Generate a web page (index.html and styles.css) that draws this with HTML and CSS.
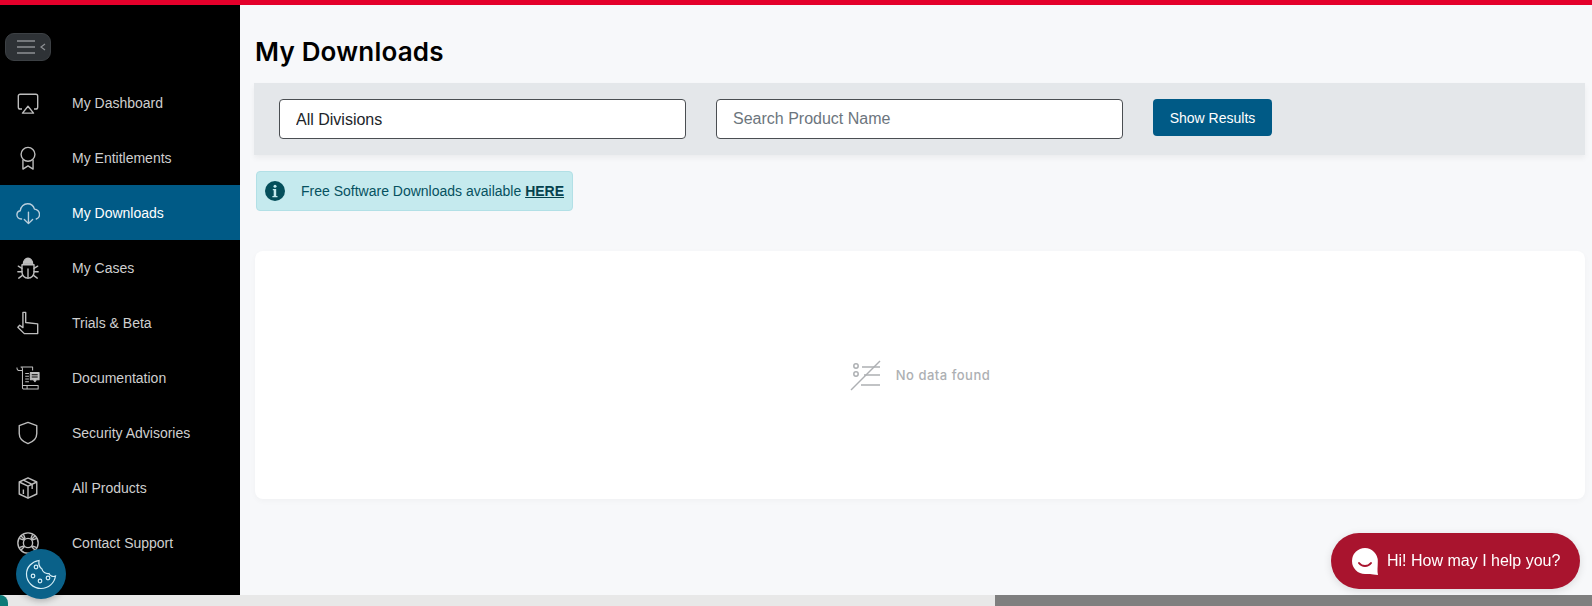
FILE: index.html
```html
<!DOCTYPE html>
<html lang="en">
<head>
<meta charset="utf-8">
<title>My Downloads</title>
<link rel="stylesheet" href="styles.css">
</head>
<body>
<div class="topbar"></div>
<div class="shell">
  <aside class="sidebar">
    <button class="toggle" aria-label="Collapse menu">
      <svg class="toggle-icon" width="36" height="20" viewBox="0 0 36 20" fill="none" stroke="#8d9094" stroke-width="1.6">
        <path d="M7 4h18M7 10h18M7 16h18"/>
        <path d="M35 7l-4 3 4 3" stroke-width="1.2"/>
      </svg>
    </button>
    <nav class="menu">
      <a class="item">
        <svg class="ico" viewBox="0 0 26 26" fill="none" stroke="currentColor" stroke-width="1.5" stroke-linejoin="round"><path d="M6.5 19.5H4.5a2 2 0 0 1-2-2V5.5a2 2 0 0 1 2-2h17a2 2 0 0 1 2 2v12a2 2 0 0 1-2 2h-2"/><path d="M13 16.5l6 7.5H7z"/></svg>
        <span>My Dashboard</span>
      </a>
      <a class="item">
        <svg class="ico" viewBox="0 0 26 26" fill="none" stroke="currentColor" stroke-width="1.5" stroke-linejoin="round"><circle cx="13" cy="9" r="7.5"/><path d="M7.5 15v10l5.5-3.5 5.500 3.500V15"/></svg>
        <span>My Entitlements</span>
      </a>
      <a class="item active">
        <svg class="ico" viewBox="0 0 26 26" fill="none" stroke="currentColor" stroke-width="1.500" stroke-linecap="round" stroke-linejoin="round"><path d="M6 19.500H5.500A4.500 4.500 0 0 1 1 15c0-2.400 1.600-4 3.600-4.400C5 6 8.500 3 12.500 3c3.800 0 6.500 2.300 7.500 5.800 3 .2 5.500 2.700 5.500 5.700 0 2.500-1.500 4.300-3.500 5"/><path d="M13.500 12v12.500M9 20l4.500 4.500L18 20"/></svg>
        <span>My Downloads</span>
      </a>
      <a class="item">
        <svg class="ico" viewBox="0 0 26 26" fill="none" stroke="currentColor" stroke-width="1.500" stroke-linecap="round" stroke-linejoin="round"><path d="M8 8.500c0-3.400 2.200-6 5-6s5 2.600 5 6z" fill="currentColor"/><path d="M6.500 9.500h13v8c0 3.800-2.900 6.500-6.500 6.500s-6.500-2.700-6.500-6.500z"/><path d="M13 14v10M6.500 13.500L2.500 11M19.500 13.500l4-2.500M6.500 17H2M19.500 17H24M7 21l-4 3M19 21l4 3"/></svg>
        <span>My Cases</span>
      </a>
      <a class="item">
        <svg class="ico" viewBox="0 0 26 26" fill="none" stroke="currentColor" stroke-width="1.500" stroke-linejoin="round"><path d="M7.500 1.500h3v11l13 1.500v10.500H9L2 17.500l2-2 3.500 2.500z"/></svg>
        <span>Trials &amp; Beta</span>
      </a>
      <a class="item">
        <svg class="ico" viewBox="0 0 26 26" fill="none" stroke="currentColor" stroke-width="1.100" stroke-linejoin="round"><path d="M5 1h13v4M1 1.500c0 2.500 1 3.500 3 3.500h3V3c0-1.500-1-2-2-2M7 3v20.500a1.500 1.500 0 0 0 1.500 1.500H24v-4H12v4M7.500 21H12"/><path d="M10 8h4M10 11h4M10 14h4M10 17h4"/><path d="M15.500 7H25v8h-3l-1.500 2-1.500-2h-3.500z" fill="currentColor"/><path d="M17 9.500h6.500M17 12h6.500" stroke="#000"/></svg>
        <span>Documentation</span>
      </a>
      <a class="item">
        <svg class="ico" viewBox="0 0 26 26" fill="none" stroke="currentColor" stroke-width="1.500" stroke-linejoin="round"><path d="M13 1.500L22.500 5v8.500c0 5.500-4 9-9.500 11-5.500-2-9.500-5.500-9.500-11V5z"/></svg>
        <span>Security Advisories</span>
      </a>
      <a class="item">
        <svg class="ico" viewBox="0 0 26 26" fill="none" stroke="currentColor" stroke-width="1.500" stroke-linejoin="round"><path d="M13 2l9.500 4.500v13L13 24l-9.500-4.500v-13z"/><path d="M3.500 6.500L13 11l9.500-4.500M13 11v13M8 4.500l9.500 4.500v5M8 14.500v5"/></svg>
        <span>All Products</span>
      </a>
      <a class="item">
        <svg class="ico" viewBox="0 0 26 26" fill="none" stroke="currentColor" stroke-width="1.500"><circle cx="13" cy="13" r="11"/><circle cx="13" cy="13" r="5"/><path d="M5.500 5.500l4 4M20.500 5.500l-4 4M5.500 20.500l4-4M20.500 20.500l-4-4M8 3.500l2 5M18 3.500l-2 5M3.500 8l5 2M3.500 18l5-2M22.500 8l-5 2M22.500 18l-5-2"/></svg>
        <span>Contact Support</span>
      </a>
    </nav>
  </aside>
  <main class="content">
    <h1 class="title">My Downloads</h1>
    <section class="filters">
      <select class="control select">
        <option>All Divisions</option>
      </select>
      <input class="control" type="text" placeholder="Search Product Name">
      <button class="show">Show Results</button>
    </section>
    <div class="notice">
      <svg class="notice-icon" viewBox="0 0 20 20"><circle cx="10" cy="10" r="10" fill="#054f5b"/><circle cx="10" cy="5.200" r="1.500" fill="#c5eaee"/><path d="M7.800 8h3.400v7h1.300v1.300h-5.100V15h1.300V9.300H7.800z" fill="#c5eaee"/></svg>
      <span>Free Software Downloads available <a class="notice-link">HERE</a></span>
    </div>
    <section class="card">
      <svg class="empty-icon" viewBox="0 0 32 32" fill="none" stroke="#adb0b3" stroke-width="1.500"><circle cx="6" cy="7" r="2.200"/><circle cx="6" cy="15" r="2.200"/><path d="M12 8h18M14 16h16M11 26h19"/><path d="M1 31L30 2"/></svg>
      <span class="empty-text">No data found</span>
    </section>
  </main>
</div>
<div class="scrolltrack"><div class="corner"></div><div class="thumb"></div></div>
<button class="cookie" aria-label="Cookie settings">
  <svg width="32" height="32" viewBox="0 0 32 32" fill="none" stroke="#d5eef6" stroke-width="1.200"><path d="M14 2.500C7 3.500 1.500 9 1.500 16c0 8 6.500 14.500 14.500 14.500 7.500 0 13.500-5.500 14.500-12.500-2.500 1.200-5.500 0-6.500-2.500-3.500.5-6.500-1.500-7-4.500-2.500-1.500-3.500-5-3-8.500z"/><circle cx="11" cy="9" r="1.800"/><circle cx="8" cy="18" r="1.800"/><circle cx="15" cy="23" r="1.800"/><circle cx="23" cy="20" r="1.800"/></svg>
</button>
<button class="chat">
  <svg width="28" height="28" viewBox="0 0 28 28"><path d="M14 1a13 13 0 1 0 0 26c3 0 6 0 13 1-1-4-.200-8-.200-14A13 13 0 0 0 14 1z" fill="#fff"/><path d="M8 16c3 4 9 4 12 0" fill="none" stroke="#a9142e" stroke-width="2" stroke-linecap="round"/></svg>
  <span>Hi! How may I help you?</span>
</button>
</body>
</html>
```
FILE: styles.css
```css
* { box-sizing: border-box; }
html, body { height: 100%; }
body {
  margin: 0;
  display: flex;
  flex-direction: column;
  overflow: hidden;
  font-family: "Liberation Sans", Arial, sans-serif;
  background: #f7f8fa;
}
.topbar { height: 5px; flex: none; background: #e4002b; }
.shell { flex: 1; min-height: 0; display: flex; overflow: hidden; }

.sidebar { width: 240px; flex: none; background: #000; display: flex; flex-direction: column; }
.toggle {
  width: 46px; height: 28px;
  margin: 28px 0 14px 5px;
  padding: 0;
  display: flex; align-items: center; justify-content: flex-start;
  background: #2e3236;
  border: 1px solid #3c4044;
  border-radius: 9px;
}
.toggle-icon { flex: none; margin-left: 4px; }
.menu { display: flex; flex-direction: column; }
.item {
  height: 55px;
  display: flex; align-items: center; gap: 32px;
  padding-left: 16px;
  color: #cfcfcf;
  font-size: 14px;
}
.item.active { background: #005a86; color: #fff; font-weight: 400; }
.item.active .ico { color: #b9cfdd; }
.ico { width: 24px; height: 24px; flex: none; color: #bdbdbd; }

.content { flex: 1; min-width: 0; padding: 0 7px 0 15px; }
.title {
  margin: 0;
  height: 78px;
  padding-top: 29px;
  font-family: Inter, "Liberation Sans", sans-serif;
  font-size: 26px;
  line-height: 36px;
  font-weight: 600;
  color: #000;
  letter-spacing: .2px;
}
.filters {
  height: 72px;
  margin-left: -1px;
  padding: 16px 25px;
  display: flex; align-items: flex-start; gap: 30px;
  background: #e4e7ea;
  box-shadow: 0 3px 6px rgba(0, 0, 0, .05);
}
.control {
  width: 407px; height: 40px;
  padding: 0 16px;
  background: #fff;
  border: 1px solid #4a4e52;
  border-radius: 4px;
  font-family: inherit;
  font-size: 16px;
  color: #212529;
}
.control::placeholder { color: #6c757d; opacity: 1; }
.select {
  appearance: none;
  background-image: linear-gradient(#000, #000);
  background-size: 0 0;
  background-repeat: no-repeat;
}
.show {
  width: 119px; height: 37px;
  padding: 0;
  background: #005a86;
  border: 0;
  border-radius: 4px;
  color: #fff;
  font-family: inherit;
  font-size: 14px;
}
.notice {
  width: 317px; height: 40px;
  margin: 16px 0 0 1px;
  padding-left: 8px;
  display: flex; align-items: center; gap: 16px;
  background: #c5eaee;
  border: 1px solid #b2e0e6;
  border-radius: 4px;
  color: #055160;
  font-size: 14px;
}
.notice-icon { width: 20px; height: 20px; flex: none; }
.notice-link { font-weight: 700; text-decoration: underline; color: #04414d; }
.card {
  height: 248px;
  margin-top: 40px;
  display: flex; align-items: center; justify-content: center; gap: 14px;
  background: #fff;
  border-radius: 8px;
  box-shadow: 0 2px 6px rgba(0, 0, 0, .03);
}
.empty-icon { width: 32px; height: 32px; flex: none; }
.empty-text {
  font-family: Inter, "Liberation Sans", sans-serif;
  font-size: 13px;
  font-weight: 500;
  letter-spacing: .5px;
  color: #adb0b3;
}

.scrolltrack { height: 11px; flex: none; display: flex; background: #e8e8e8; }
.corner { width: 8px; background: #0d7a78; border-top-right-radius: 8px; }
.thumb { margin-left: auto; width: 597px; background: #7f7f7f; }

.cookie {
  position: fixed; left: 16px; top: 549px;
  width: 50px; height: 50px;
  padding: 0;
  display: flex; align-items: center; justify-content: center;
  background: #0a6189;
  border: 0;
  border-radius: 50%;
  box-shadow: 0 2px 6px rgba(0, 0, 0, .25);
}
.chat {
  position: fixed; left: 1331px; top: 533px;
  width: 249px; height: 56px;
  padding: 0 0 0 20px;
  display: flex; align-items: center; gap: 8px;
  background: #a9142e;
  border: 0;
  border-radius: 28px;
  color: #fff;
  font-family: inherit;
  font-size: 16px;
  box-shadow: 0 2px 8px rgba(0, 0, 0, .12);
}
```
